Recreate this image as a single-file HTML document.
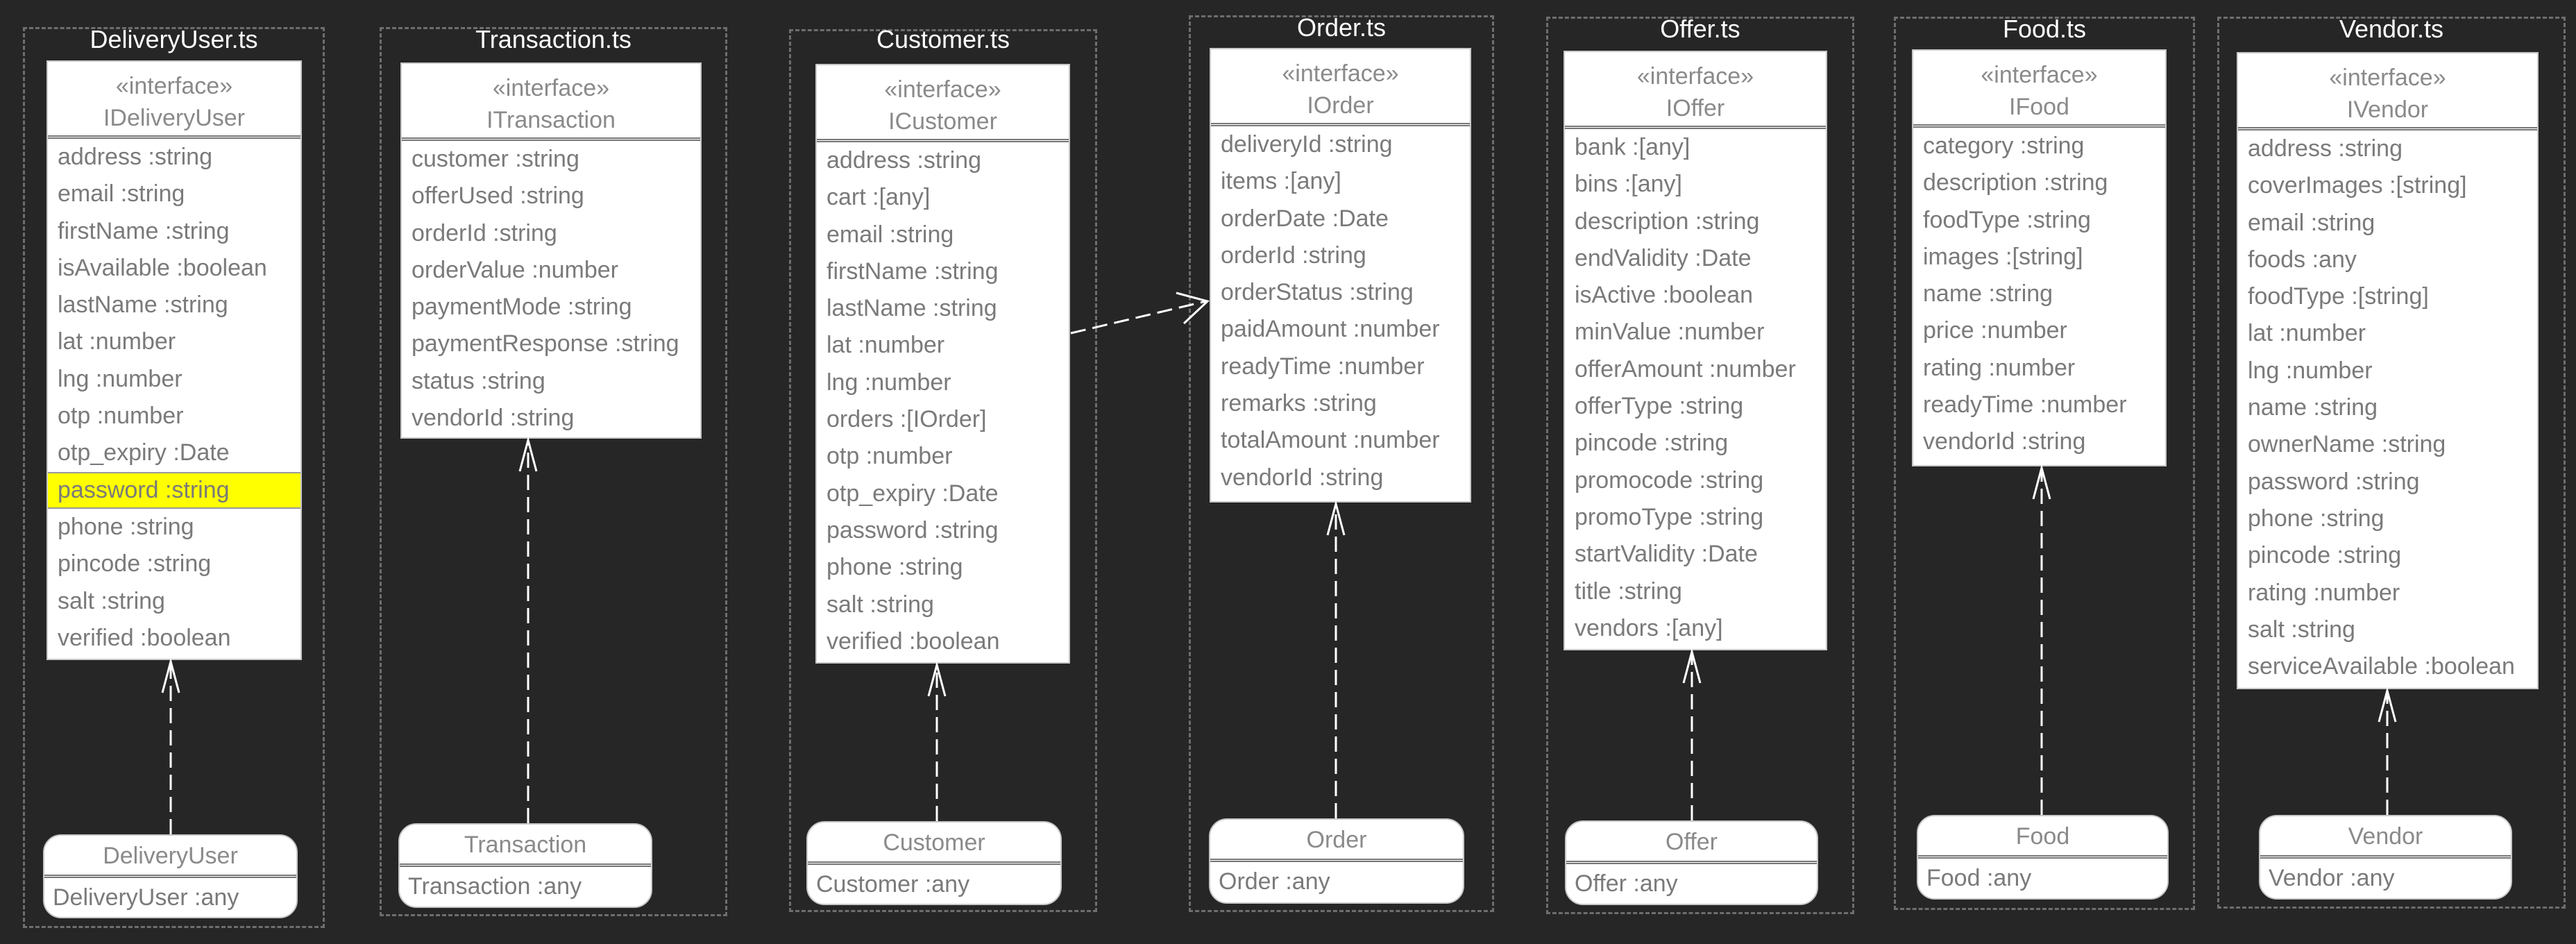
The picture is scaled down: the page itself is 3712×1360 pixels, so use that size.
<!DOCTYPE html>
<html><head><meta charset="utf-8"><style>
html,body{margin:0;padding:0}
body{width:3712px;height:1360px;background:#262626;position:relative;overflow:hidden;font-family:"Liberation Sans",sans-serif}
.f{position:absolute;border:3px dashed #6e6e6e;box-sizing:border-box}
.t{position:absolute;color:#fff;font-size:36px;text-align:center;line-height:44px}
.b{position:absolute;background:#fff;border:2px solid #c8c8c8;box-sizing:border-box;color:#7a7a7a;font-size:34px;overflow:hidden}
.h{height:111px;border-bottom:5px double #777;text-align:center;color:#8a8a8a;line-height:46px;padding-top:12px;box-sizing:border-box}
.r{line-height:53.3px;height:53.3px;padding-left:14px;white-space:nowrap;box-sizing:border-box}
.y{background:#ffff00;border-top:2px solid #999;border-bottom:2px solid #999;line-height:49px}
.c{position:absolute;background:#fff;border:2px solid #c8c8c8;border-radius:26px;box-sizing:border-box;color:#7a7a7a;font-size:34px;overflow:hidden}
.ch{height:61px;line-height:58px;text-align:center;border-bottom:5px double #777;color:#8a8a8a;box-sizing:border-box}
.cr{line-height:56px;padding-left:12px;white-space:nowrap}
svg{position:absolute;left:0;top:0}
</style></head><body>

<div class="f" style="left:33px;top:39px;width:435px;height:1298px"></div>
<div class="f" style="left:547px;top:39px;width:501px;height:1281px"></div>
<div class="f" style="left:1137px;top:42px;width:444px;height:1272px"></div>
<div class="f" style="left:1713px;top:22px;width:440px;height:1292px"></div>
<div class="f" style="left:2228px;top:24px;width:444px;height:1293px"></div>
<div class="f" style="left:2729px;top:24px;width:434px;height:1287px"></div>
<div class="f" style="left:3195px;top:24px;width:502px;height:1285px"></div>

<div class="t" style="left:33px;top:35px;width:435px">DeliveryUser.ts</div>
<div class="t" style="left:547px;top:35px;width:501px">Transaction.ts</div>
<div class="t" style="left:1137px;top:35px;width:444px">Customer.ts</div>
<div class="t" style="left:1713px;top:18px;width:440px">Order.ts</div>
<div class="t" style="left:2228px;top:20px;width:444px">Offer.ts</div>
<div class="t" style="left:2729px;top:20px;width:434px">Food.ts</div>
<div class="t" style="left:3195px;top:20px;width:502px">Vendor.ts</div>

<div class="b" style="left:67px;top:87px;width:368px;height:864px">
<div class="h">«interface»<br>IDeliveryUser</div>
<div class="r">address :string</div><div class="r">email :string</div><div class="r">firstName :string</div><div class="r">isAvailable :boolean</div><div class="r">lastName :string</div><div class="r">lat :number</div><div class="r">lng :number</div><div class="r">otp :number</div><div class="r">otp_expiry :Date</div><div class="r y">password :string</div><div class="r">phone :string</div><div class="r">pincode :string</div><div class="r">salt :string</div><div class="r">verified :boolean</div>
</div>

<div class="b" style="left:577px;top:90px;width:434px;height:542px">
<div class="h">«interface»<br>ITransaction</div>
<div class="r">customer :string</div><div class="r">offerUsed :string</div><div class="r">orderId :string</div><div class="r">orderValue :number</div><div class="r">paymentMode :string</div><div class="r">paymentResponse :string</div><div class="r">status :string</div><div class="r">vendorId :string</div>
</div>

<div class="b" style="left:1175px;top:92px;width:367px;height:864px">
<div class="h">«interface»<br>ICustomer</div>
<div class="r">address :string</div><div class="r">cart :[any]</div><div class="r">email :string</div><div class="r">firstName :string</div><div class="r">lastName :string</div><div class="r">lat :number</div><div class="r">lng :number</div><div class="r">orders :[IOrder]</div><div class="r">otp :number</div><div class="r">otp_expiry :Date</div><div class="r">password :string</div><div class="r">phone :string</div><div class="r">salt :string</div><div class="r">verified :boolean</div>
</div>

<div class="b" style="left:1743px;top:69px;width:377px;height:655px">
<div class="h">«interface»<br>IOrder</div>
<div class="r">deliveryId :string</div><div class="r">items :[any]</div><div class="r">orderDate :Date</div><div class="r">orderId :string</div><div class="r">orderStatus :string</div><div class="r">paidAmount :number</div><div class="r">readyTime :number</div><div class="r">remarks :string</div><div class="r">totalAmount :number</div><div class="r">vendorId :string</div>
</div>

<div class="b" style="left:2253px;top:73px;width:380px;height:864px">
<div class="h">«interface»<br>IOffer</div>
<div class="r">bank :[any]</div><div class="r">bins :[any]</div><div class="r">description :string</div><div class="r">endValidity :Date</div><div class="r">isActive :boolean</div><div class="r">minValue :number</div><div class="r">offerAmount :number</div><div class="r">offerType :string</div><div class="r">pincode :string</div><div class="r">promocode :string</div><div class="r">promoType :string</div><div class="r">startValidity :Date</div><div class="r">title :string</div><div class="r">vendors :[any]</div>
</div>

<div class="b" style="left:2755px;top:71px;width:367px;height:601px">
<div class="h">«interface»<br>IFood</div>
<div class="r">category :string</div><div class="r">description :string</div><div class="r">foodType :string</div><div class="r">images :[string]</div><div class="r">name :string</div><div class="r">price :number</div><div class="r">rating :number</div><div class="r">readyTime :number</div><div class="r">vendorId :string</div>
</div>

<div class="b" style="left:3223px;top:75px;width:435px;height:918px">
<div class="h">«interface»<br>IVendor</div>
<div class="r">address :string</div><div class="r">coverImages :[string]</div><div class="r">email :string</div><div class="r">foods :any</div><div class="r">foodType :[string]</div><div class="r">lat :number</div><div class="r">lng :number</div><div class="r">name :string</div><div class="r">ownerName :string</div><div class="r">password :string</div><div class="r">phone :string</div><div class="r">pincode :string</div><div class="r">rating :number</div><div class="r">salt :string</div><div class="r">serviceAvailable :boolean</div>
</div>

<div class="c" style="left:62px;top:1202px;width:367px;height:121px"><div class="ch">DeliveryUser</div><div class="cr">DeliveryUser :any</div></div>
<div class="c" style="left:574px;top:1186px;width:366px;height:122px"><div class="ch">Transaction</div><div class="cr">Transaction :any</div></div>
<div class="c" style="left:1162px;top:1183px;width:368px;height:121px"><div class="ch">Customer</div><div class="cr">Customer :any</div></div>
<div class="c" style="left:1742px;top:1179px;width:368px;height:123px"><div class="ch">Order</div><div class="cr">Order :any</div></div>
<div class="c" style="left:2255px;top:1182px;width:365px;height:122px"><div class="ch">Offer</div><div class="cr">Offer :any</div></div>
<div class="c" style="left:2762px;top:1174px;width:363px;height:122px"><div class="ch">Food</div><div class="cr">Food :any</div></div>
<div class="c" style="left:3255px;top:1174px;width:365px;height:122px"><div class="ch">Vendor</div><div class="cr">Vendor :any</div></div>

<svg width="3712" height="1360" viewBox="0 0 3712 1360">
<g stroke="#fff" stroke-width="3" fill="none">
<g stroke-dasharray="22 10">
<line x1="246" y1="1202" x2="246" y2="953"/>
<line x1="761" y1="1186" x2="761" y2="634"/>
<line x1="1350" y1="1183" x2="1350" y2="958"/>
<line x1="1925" y1="1179" x2="1925" y2="726"/>
<line x1="2438" y1="1182" x2="2438" y2="939"/>
<line x1="2942" y1="1174" x2="2942" y2="674"/>
<line x1="3440" y1="1174" x2="3440" y2="995"/>
<line x1="1543" y1="480" x2="1738" y2="434"/>
</g>
<path d="M234 998 L246 953 L258 998"/>
<path d="M749 679 L761 634 L773 679"/>
<path d="M1338 1003 L1350 958 L1362 1003"/>
<path d="M1913 771 L1925 726 L1937 771"/>
<path d="M2426 984 L2438 939 L2450 984"/>
<path d="M2930 719 L2942 674 L2954 719"/>
<path d="M3428 1040 L3440 995 L3452 1040"/>
<path d="M1695 422 L1740 434 L1706 466"/>
</g>
</svg>
</body></html>
